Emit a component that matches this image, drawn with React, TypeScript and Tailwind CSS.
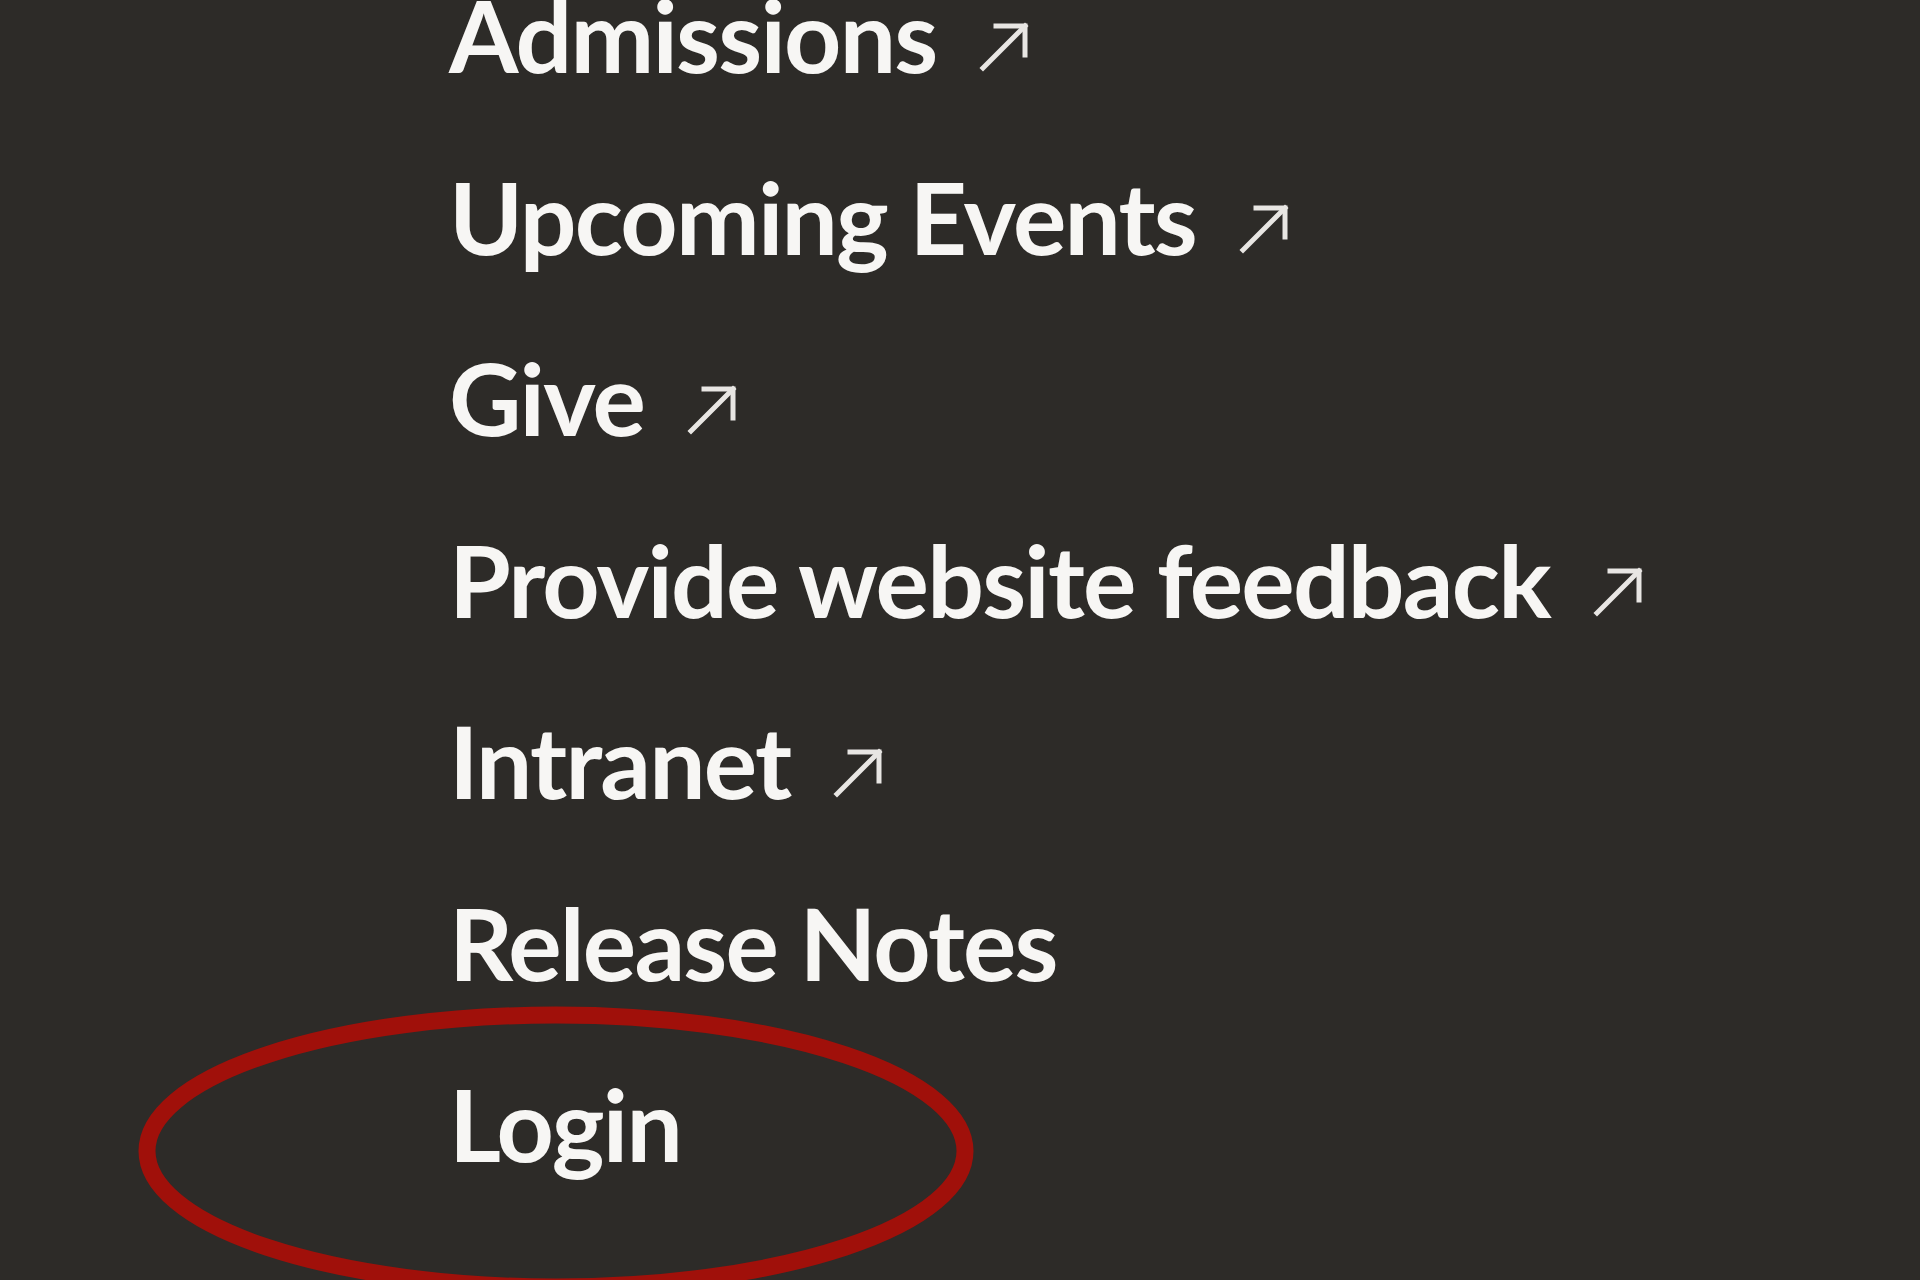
import React from 'react';

const links = [
  { label: 'Admissions', external: true },
  { label: 'Upcoming Events', external: true },
  { label: 'Give', external: true },
  { label: 'Provide website feedback', external: true },
  { label: 'Intranet', external: true },
  { label: 'Release Notes', external: false },
  { label: 'Login', external: false },
];

const ExternalArrow = () => (
  <svg
    viewBox="0 0 56 54"
    className="ml-[40px] h-[54px] w-[56px] shrink-0 self-baseline"
    fill="none"
    stroke="#e8e6e3"
    strokeWidth="5"
    strokeLinecap="square"
  >
    <path d="M7 49 L49 7" />
    <path d="M20 7 H49 V36" />
  </svg>
);

export default function App() {
  return (
    <div className="relative h-[1280px] w-[1920px] overflow-hidden bg-[#2d2b28] font-['Lato','Open_Sans',sans-serif] text-[#f7f6f4]">
      <ul className="mt-[-56px] pl-[449px]">
        {links.map((link) => (
          <li key={link.label} className="flex items-baseline text-[100px] font-bold leading-[181.5px]">
            <a href="#" className="tracking-[-1.8px]">
              {link.label}
            </a>
            {link.external && <ExternalArrow />}
          </li>
        ))}
      </ul>

      {/* red annotation ring around Login */}
      <svg className="pointer-events-none absolute left-0 top-0" width="1920" height="1280">
        <ellipse cx="556" cy="1151" rx="409" ry="136" fill="none" stroke="#a0100a" strokeWidth="17" />
      </svg>
    </div>
  );
}
